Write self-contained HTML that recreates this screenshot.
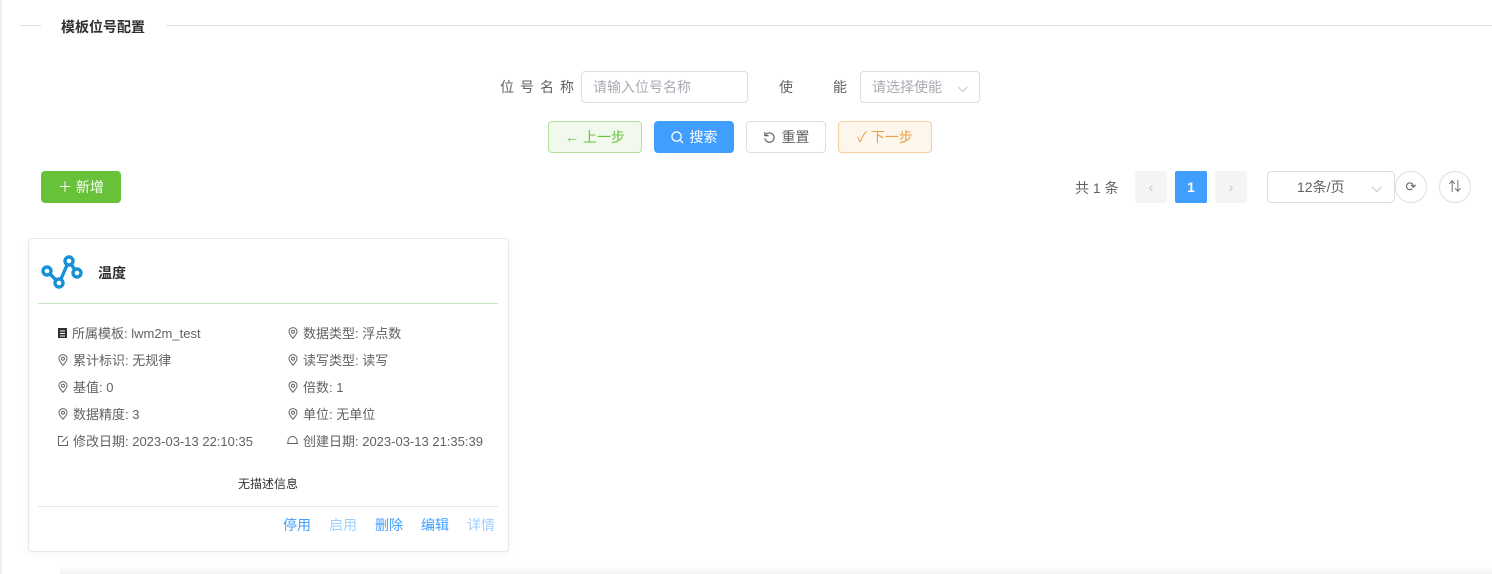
<!DOCTYPE html><html><head><meta charset="utf-8"><style>
*{box-sizing:border-box;margin:0;padding:0}
body{width:1492px;height:574px;background:#fff;font-family:"Liberation Sans","Noto Sans CJK SC",sans-serif;color:#303133;position:relative;overflow:hidden;font-size:14px}
.abs{position:absolute}
.btn{position:absolute;height:32px;border-radius:4px;border:1px solid #dcdfe6;font-size:14px;display:flex;align-items:center;justify-content:center;gap:6px}
.inp{position:absolute;height:32px;border:1px solid #dcdfe6;border-radius:4px;color:#a8abb2;font-size:14px;padding-left:11px;line-height:30px}
.row{position:absolute;font-size:13px;color:#606266;display:flex;align-items:center;gap:4px;white-space:nowrap}
.lk{position:absolute;top:515px;font-size:14px;color:#409eff}
</style></head><body>
<svg width="0" height="0" style="position:absolute"><defs><symbol id="pin" viewBox="0 0 12 12"><path d="M6 11.3C3.5 8.5 2 6.6 2 4.6A4 4 0 0 1 10 4.6C10 6.6 8.5 8.5 6 11.3Z" fill="none" stroke="#606266" stroke-width="1"/><circle cx="6" cy="4.7" r="1.5" fill="none" stroke="#606266" stroke-width="1"/></symbol></defs></svg>
<div class="abs" style="left:0;top:0;width:2px;height:574px;background:#eef0f4"></div>
<div class="abs" style="left:20px;top:25px;width:21px;height:1px;background:#dcdfe6"></div>
<div class="abs" style="left:166px;top:25px;width:1326px;height:1px;background:#dcdfe6"></div>
<div class="abs" style="left:61px;top:17px;font-size:14px;font-weight:bold;color:#303133">模板位号配置</div>

<div class="abs" style="left:500px;top:77px;font-size:14px;color:#606266;letter-spacing:6px">位号名称</div>
<div class="inp" style="left:581px;top:71px;width:167px">请输入位号名称</div>
<div class="abs" style="left:779px;top:77px;font-size:14px;color:#606266">使</div>
<div class="abs" style="left:833px;top:77px;font-size:14px;color:#606266">能</div>
<div class="inp" style="left:860px;top:71px;width:120px">请选择使能<span style="position:absolute;right:11px;top:0;color:#a8abb2">⌵</span></div>

<div class="btn" style="left:548px;top:121px;width:94px;background:#f0f9eb;border-color:#b3e19d;color:#67c23a">← 上一步</div>
<div class="btn" style="left:654px;top:121px;width:80px;background:#409eff;border-color:#409eff;color:#fff"><svg width="13" height="13" viewBox="0 0 14 14"><circle cx="6" cy="6" r="5" fill="none" stroke="#fff" stroke-width="1.4"/><path d="M10 10l3 3" stroke="#fff" stroke-width="1.4"/></svg>搜索</div>
<div class="btn" style="left:746px;top:121px;width:80px;color:#606266"><svg width="13" height="13" viewBox="0 0 14 14"><path d="M3 4A5 5 0 1 1 2 8" fill="none" stroke="#606266" stroke-width="1.3"/><path d="M2 1v4h4" fill="none" stroke="#606266" stroke-width="1.3"/></svg>重置</div>
<div class="btn" style="left:838px;top:121px;width:94px;background:#fdf6ec;border-color:#f3d19e;color:#e6a23c">✓ 下一步</div>

<div class="btn" style="left:41px;top:171px;width:80px;height:32px;background:#67c23a;border-color:#67c23a;color:#fff">＋ 新增</div>

<div class="abs" style="left:1075px;top:178px;font-size:14px;color:#606266">共 1 条</div>
<div class="abs" style="left:1135px;top:171px;width:32px;height:32px;background:#f4f4f5;border-radius:2px;color:#c0c4cc;text-align:center;line-height:32px">‹</div>
<div class="abs" style="left:1175px;top:171px;width:32px;height:32px;background:#409eff;border-radius:2px;color:#fff;text-align:center;line-height:32px;font-weight:bold">1</div>
<div class="abs" style="left:1215px;top:171px;width:32px;height:32px;background:#f4f4f5;border-radius:2px;color:#c0c4cc;text-align:center;line-height:32px">›</div>
<div class="inp" style="left:1267px;top:171px;width:128px;color:#606266;padding-left:29px">12条/页<span style="position:absolute;right:12px;top:0;color:#a8abb2">⌵</span></div>
<div class="abs" style="left:1395px;top:171px;width:32px;height:32px;border:1px solid #dcdfe6;border-radius:50%;text-align:center;line-height:30px;color:#606266;font-size:13px">⟳</div>
<div class="abs" style="left:1439px;top:171px;width:32px;height:32px;border:1px solid #dcdfe6;border-radius:50%;text-align:center;line-height:30px;color:#606266;font-size:13px">⇅</div>

<div class="abs" style="left:28px;top:238px;width:481px;height:314px;border:1px solid #e4e7ed;border-radius:4px;box-shadow:0 2px 8px rgba(0,0,0,.04)"></div>
<svg class="abs" style="left:40px;top:254px" width="44" height="36" viewBox="0 0 44 36"><g fill="none" stroke="#1890d8" stroke-width="3.4"><circle cx="7" cy="17" r="4"/><circle cx="19" cy="29" r="4"/><circle cx="29" cy="7" r="4"/><circle cx="37" cy="19" r="4"/><path d="M10 20l6 6M21 25l6-14M31 10l4 6"/></g></svg>
<div class="abs" style="left:98px;top:263px;font-size:14px;font-weight:bold;color:#303133">温度</div>
<div class="abs" style="left:38px;top:303px;width:460px;height:1px;background:#c9e4c0"></div>

<div class="row" style="left:57px;top:323px"><svg width="11" height="12" viewBox="0 0 11 12"><rect x="1" y="1" width="9" height="10" fill="#303133"/><path d="M3 4h5M3 6.5h5M3 9h5" stroke="#fff"/></svg> 所属模板: lwm2m_test</div>
<div class="row" style="left:57px;top:350px"><svg width="12" height="12"><use href="#pin"/></svg> 累计标识: 无规律</div>
<div class="row" style="left:57px;top:377px"><svg width="12" height="12"><use href="#pin"/></svg> 基值: 0</div>
<div class="row" style="left:57px;top:404px"><svg width="12" height="12"><use href="#pin"/></svg> 数据精度: 3</div>
<div class="row" style="left:57px;top:431px"><svg width="12" height="12" viewBox="0 0 12 12"><path d="M6 1.5H1.5v9h9V6" fill="none" stroke="#606266"/><path d="M5 7l5.5-5.5" stroke="#606266"/></svg> 修改日期: 2023-03-13 22:10:35</div>
<div class="row" style="left:287px;top:323px"><svg width="12" height="12"><use href="#pin"/></svg> 数据类型: 浮点数</div>
<div class="row" style="left:287px;top:350px"><svg width="12" height="12"><use href="#pin"/></svg> 读写类型: 读写</div>
<div class="row" style="left:287px;top:377px"><svg width="12" height="12"><use href="#pin"/></svg> 倍数: 1</div>
<div class="row" style="left:287px;top:404px"><svg width="12" height="12"><use href="#pin"/></svg> 单位: 无单位</div>
<div class="row" style="left:286px;top:431px"><svg width="13" height="12" viewBox="0 0 13 12"><path d="M2 8.5V6a4.5 4.5 0 0 1 9 0v2.5M1 8.5h11" fill="none" stroke="#606266"/></svg> 创建日期: 2023-03-13 21:35:39</div>

<div class="abs" style="left:238px;top:475px;font-size:12px;color:#303133">无描述信息</div>
<div class="abs" style="left:38px;top:506px;width:460px;height:1px;background:#e4e7ed"></div>
<div class="lk" style="left:283px">停用</div>
<div class="lk" style="left:329px;color:#a0cfff">启用</div>
<div class="lk" style="left:375px">删除</div>
<div class="lk" style="left:421px">编辑</div>
<div class="lk" style="left:467px;color:#a0cfff">详情</div>
<div class="abs" style="left:60px;top:566px;width:1432px;height:8px;background:linear-gradient(#fff,#f2f3f5)"></div>
</body></html>
